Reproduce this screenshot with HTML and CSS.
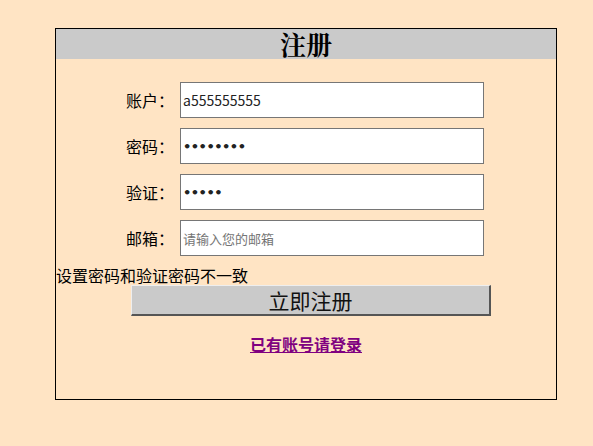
FILE: index.html
```html
<!DOCTYPE html>
<html lang="zh">
<head>
    <meta charset="UTF-8">
    <title>注册</title>
    <link rel="stylesheet" href="styles.css">
</head>
<body>

<div class="register-box">
    <h1 class="title">注册</h1>
    <form class="register-form">
        <div class="form-row">
            <label for="account">账户：</label>
            <input type="text" id="account" value="a555555555">
        </div>
        <div class="form-row">
            <label for="password">密码：</label>
            <input type="password" id="password" value="12345678">
        </div>
        <div class="form-row">
            <label for="confirm">验证：</label>
            <input type="password" id="confirm" value="12345">
        </div>
        <div class="form-row">
            <label for="email">邮箱：</label>
            <input type="text" id="email" placeholder="请输入您的邮箱">
        </div>
        <div class="error-msg">设置密码和验证密码不一致</div>
        <button type="button" class="submit-btn">立即注册</button>
    </form>
    <div class="login-link">
        <a href="#">已有账号请登录</a>
    </div>
</div>

</body>
</html>
```

FILE: styles.css
```css
body {
    margin: 0;
    padding: 28px 0 0 55px;
    background-color: #ffe4c4;
    font-family: "Noto Sans CJK SC", sans-serif;
}
.register-box {
    width: 500px;
    height: 370px;
    border: 1px solid #000;
}
.title {
    margin: 0;
    height: 30px;
    line-height: 30px;
    background-color: #cacaca;
    text-align: center;
    font-size: 26px;
    font-weight: bold;
    font-family: "Noto Serif CJK SC", "Noto Sans CJK SC", serif;
}
.register-form {
    padding-top: 23px;
}
.form-row {
    display: flex;
    align-items: center;
    margin-bottom: 10px;
}
.form-row label {
    width: 118px;
    margin-right: 6px;
    text-align: right;
    font-size: 16px;
}
.form-row input {
    box-sizing: border-box;
    width: 304px;
    height: 36px;
    border: 1px solid #767676;
    padding: 0 2px;
    font-size: 14px;
    font-family: "Noto Sans CJK SC", sans-serif;
    background: #fff;
    color: #222;
}
.form-row input[type="password"] {
    font-family: "DejaVu Sans", sans-serif;
    font-size: 13px;
    font-weight: bold;
    letter-spacing: -0.5px;
    color: #222;
}
.form-row input::placeholder {
    color: #757575;
    font-size: 13px;
}
.error-msg {
    font-size: 16px;
    line-height: 20px;
    margin-top: -1px;
}
.submit-btn {
    display: block;
    box-sizing: border-box;
    width: 360px;
    height: 31px;
    margin-left: 75px;
    padding: 0;
    background-color: #cacaca;
    border: 1px solid #eee;
    border-right: 2px solid #555;
    border-bottom: 2px solid #555;
    font-size: 21px;
    line-height: 25px;
    font-family: "Noto Sans CJK SC", sans-serif;
    color: #111;
}
.login-link {
    text-align: center;
    margin-top: 16px;
}
.login-link a {
    color: #800080;
    font-weight: bold;
    font-size: 16px;
}
```
